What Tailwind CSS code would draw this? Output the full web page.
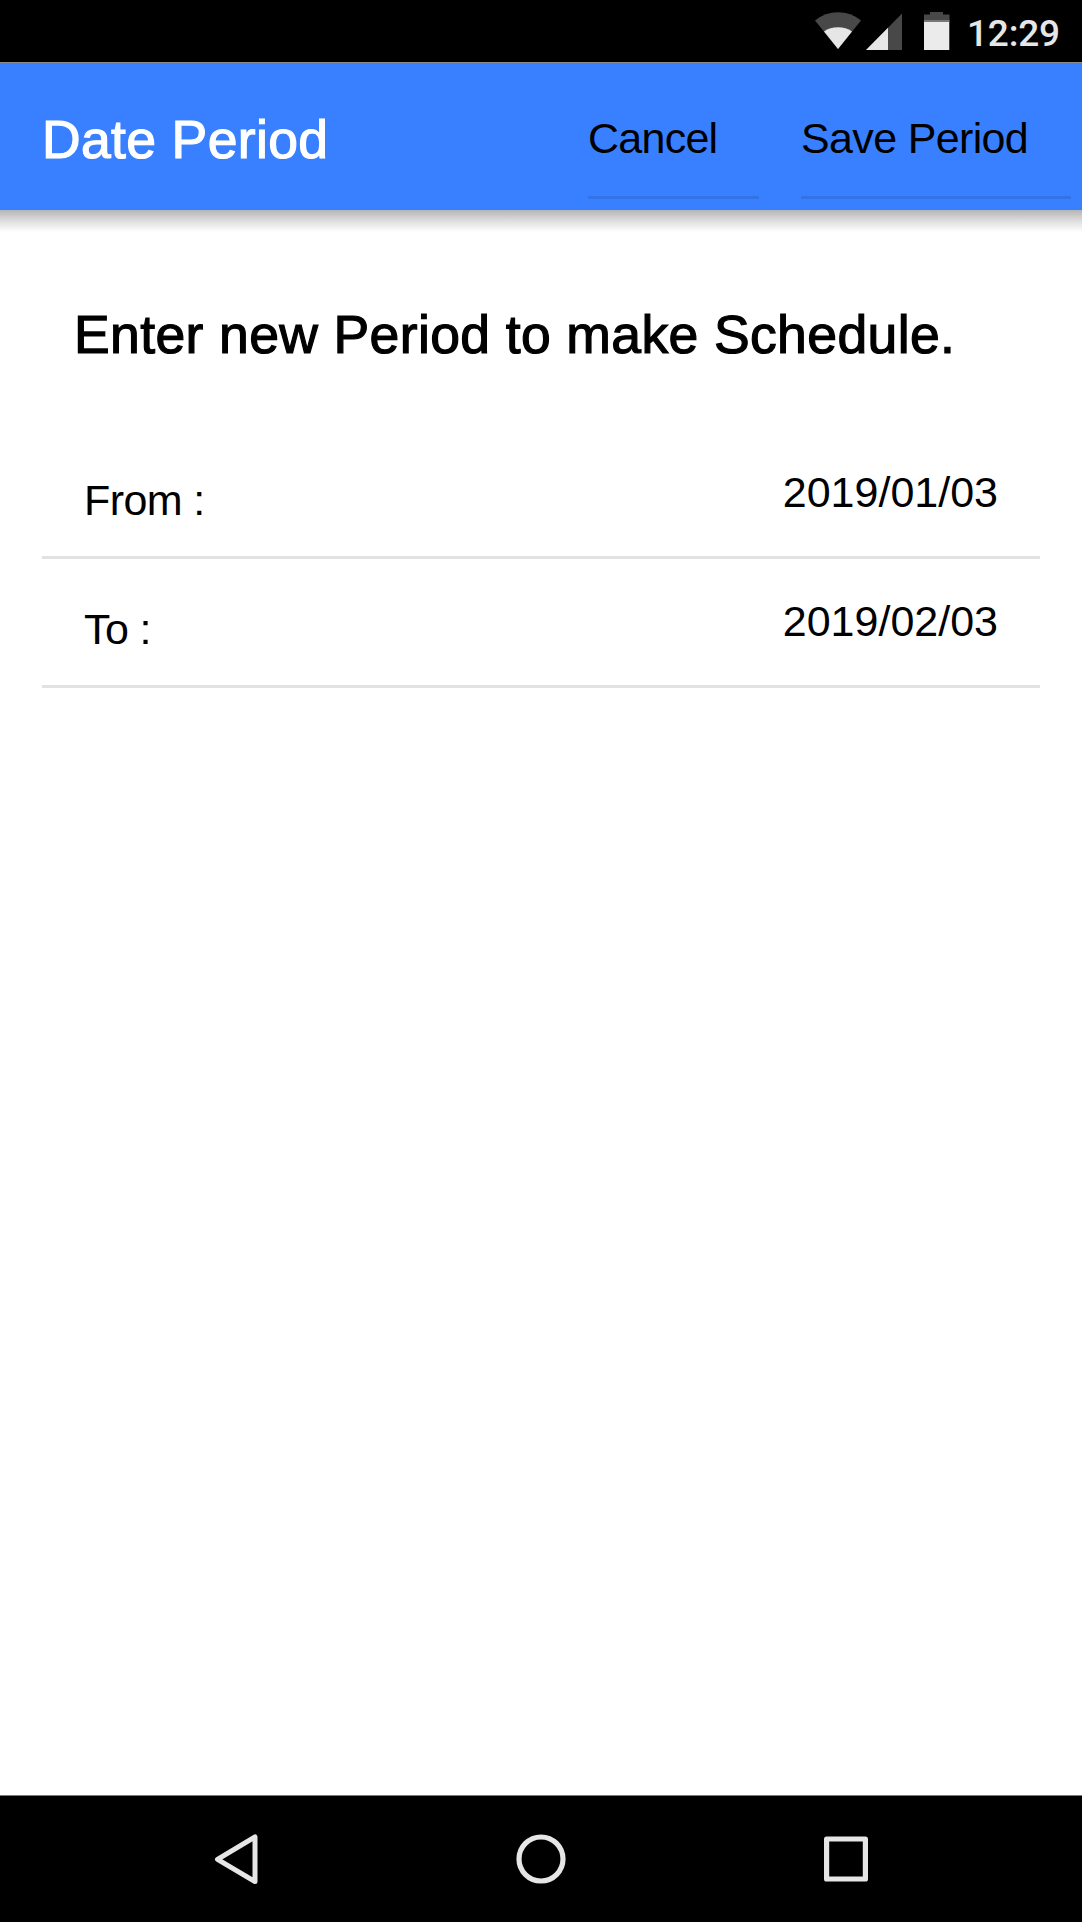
<!DOCTYPE html>
<html lang="en">
<head>
<meta charset="utf-8">
<title>Date Period</title>
<script src="https://cdn.jsdelivr.net/npm/@tailwindcss/browser@4"></script>
</head>
<body class="flex h-[1922px] w-[1082px] flex-col overflow-hidden bg-white font-['Liberation_Sans',sans-serif] text-black">
  <!-- Status bar -->
  <div class="flex h-[63px] shrink-0 items-start justify-end border-b border-[#888] bg-black pr-[21px]">
    <svg class="h-[62px] w-[47px]" viewBox="815 0 47 62"><path d="M838 49L815 20.5Q825 12.2 838 12.2T861 20.5Z" fill="#484848"/><path d="M838 49L824 31.5Q830 27.3 838 27.3T852 31.5Z" fill="#e6e6e6"/></svg>
    <svg class="ml-1 h-[62px] w-[36px]" viewBox="866 0 36 62"><path d="M866 50L902 13.5V50Z" fill="#484848"/><path d="M866 50L888 27.7V50Z" fill="#e6e6e6"/></svg>
    <svg class="ml-[22px] h-[62px] w-[26px]" viewBox="924 0 26 62"><path d="M924 22V14.5H930V12H943V14.5H949.5V22Z" fill="#484848"/><path d="M924 20H949.5V22H924Z" fill="#777"/><path d="M924 22H949.3V50H924Z" fill="#ebebeb"/></svg>
    <time class="ml-[17px] w-[94px] font-[Roboto,sans-serif] text-[37px] leading-[67px] font-medium tracking-[-0.2px] whitespace-nowrap text-[#e6e6e6]">12:29</time>
  </div>
  <!-- App bar -->
  <header class="relative flex h-[147px] shrink-0 items-start bg-[#3880ff] pl-[42px] after:absolute after:top-full after:left-0 after:h-[22px] after:w-full after:bg-linear-to-b after:from-[#b5b5b5] after:via-[#dedede] after:to-white after:content-['']">
    <h1 class="w-[546px] text-[53.5px] leading-[154px] tracking-[0.35px] text-white [-webkit-text-stroke:1.2px_white]">Date Period</h1>
    <button class="mr-[42px] h-[136px] w-[171px] border-b-[3px] border-[#3373e6] text-left text-[43px] whitespace-nowrap"><span class="block h-[133px] leading-[151px] tracking-[-0.75px]">Cancel</span></button>
    <button class="h-[136px] w-[270px] border-b-[3px] border-[#3373e6] text-left text-[43px] whitespace-nowrap"><span class="block h-[133px] leading-[151px] tracking-[-0.65px]">Save Period</span></button>
  </header>
  <main class="flex-1 px-[42px] pt-[85px]">
    <h2 class="mb-[67px] pl-[32px] text-[53.5px] leading-[80px] tracking-[0.38px] whitespace-nowrap [-webkit-text-stroke:1.2px_black]">Enter new Period to make Schedule.</h2>
    <div class="flex h-[117px] justify-between border-b-[3px] border-[#e2e2e2] pr-[42px] pl-[42px] text-[43px]">
      <span class="pt-[33px] leading-[50px] tracking-[-0.6px]">From :</span>
      <span class="pt-[25px] leading-[50px]">2019/01/03</span>
    </div>
    <div class="flex h-[129px] justify-between border-b-[3px] border-[#e2e2e2] pr-[42px] pl-[42px] text-[43px]">
      <span class="pt-[45px] leading-[50px] tracking-[-0.6px]">To :</span>
      <span class="pt-[37px] leading-[50px]">2019/02/03</span>
    </div>
  </main>
  <!-- Navigation bar -->
  <nav class="flex h-[127px] shrink-0 justify-between border-t border-[#3880ff] bg-black pr-[212px] pl-[213px]">
    <svg class="h-[126px] w-[47px]" viewBox="213 1796 47 126" fill="none" stroke="#e6e6e6" stroke-width="5" stroke-linejoin="round"><path d="M217.5 1859.3L255 1837V1881.5Z"/></svg>
    <svg class="h-[126px] w-[52px]" viewBox="515 1796 52 126" fill="none" stroke="#e6e6e6" stroke-width="5.2"><circle cx="541" cy="1859" r="22"/></svg>
    <svg class="h-[126px] w-[48px]" viewBox="822 1796 48 126" fill="none" stroke="#e6e6e6" stroke-width="5.2" stroke-linejoin="round"><rect x="826.6" y="1839" width="38.8" height="40"/></svg>
  </nav>
</body>
</html>
